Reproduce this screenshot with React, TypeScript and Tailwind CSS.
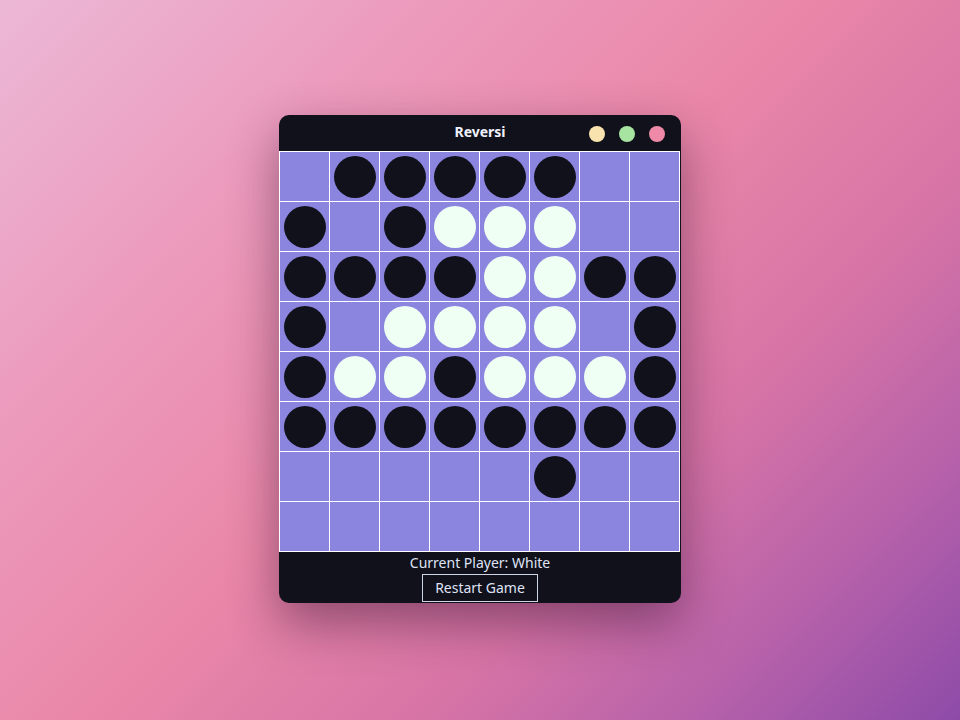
import React from "react";

const BOARD = [
  ".BBBBB..",
  "B.BWWW..",
  "BBBBWWBB",
  "B.WWWW.B",
  "BWWBWWWB",
  "BBBBBBBB",
  ".....B..",
  "........",
];

export default function App() {
  return (
    <div
      className="w-screen h-screen flex items-center justify-center pb-[2px]"
      style={{
        background:
          "linear-gradient(135deg, #ecb8d6 0%, #ec9bbd 25%, #ea87a8 48%, #d774a6 68%, #b460aa 85%, #8d4ba8 100%)",
        fontFamily: '"Noto Sans", "Open Sans", sans-serif',
      }}
    >
      <div className="w-[402px] rounded-[10px] overflow-hidden bg-[#11111b] flex flex-col shadow-[0_20px_50px_rgba(40,10,40,0.45)]">
        <div className="h-9 grid grid-cols-3 items-center">
          <div />
          <div className="text-center text-[14px] leading-5 font-bold text-[#eef0fb] pb-[2px]">Reversi</div>
          <div className="flex justify-end items-center gap-[14px] pr-4 pt-px">
            <span className="w-4 h-4 rounded-full bg-[#f8e2ae]" />
            <span className="w-4 h-4 rounded-full bg-[#a7e3a1]" />
            <span className="w-4 h-4 rounded-full bg-[#ee8aa8]" />
          </div>
        </div>
        <div className="grid grid-cols-8 gap-px bg-white p-px w-[401px]">
          {BOARD.flatMap((row, r) =>
            row.split("").map((c, i) => (
              <div key={r + "-" + i} className="w-[49px] h-[49px] bg-[#8b85df] flex items-center justify-center">
                {c === "B" && <div className="w-[42px] h-[42px] rounded-full bg-[#11111b]" />}
                {c === "W" && <div className="w-[42px] h-[42px] rounded-full bg-[#effff4]" />}
              </div>
            ))
          )}
        </div>
        <div className="flex flex-col items-center h-[51px] pt-px">
          <div className="text-[14px] leading-5 text-[#dfe3f6]">Current Player: White</div>
          <button className="mt-px h-[28px] px-3 border border-[#cfd3e6] text-[14px] leading-5 text-[#dfe3f6] bg-transparent">
            Restart Game
          </button>
        </div>
      </div>
    </div>
  );
}
